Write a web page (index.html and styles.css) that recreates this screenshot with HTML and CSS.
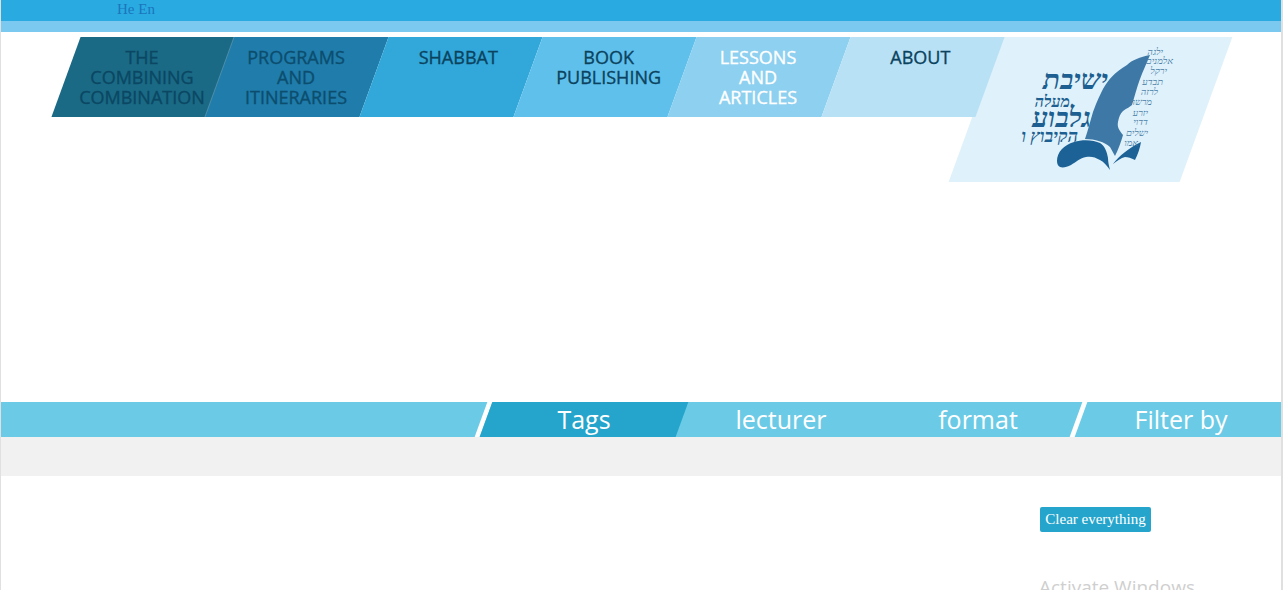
FILE: index.html
```html
<!DOCTYPE html>
<html lang="en">
  <head>
    <meta charset="UTF-8" />
    <meta name="viewport" content="width=device-width, initial-scale=1.0" />
    <title>Document</title>
    <link rel="stylesheet" href="styles.css">
  </head>
  <body>
    <div class="page">
      <div class="lang-bar">
        <a href="#">He</a>
        <a href="#">En</a>
      </div>
      <div class="sub-bar"></div>

      <header class="header">
        <nav class="main-nav">
          <a class="nav-item three-lines nav-1" href="#"><span>THE<br />COMBINING<br />COMBINATION</span></a>
          <a class="nav-item three-lines nav-2" href="#"><span>PROGRAMS<br />AND<br />ITINERARIES</span></a>
          <a class="nav-item nav-3" href="#"><span>SHABBAT</span></a>
          <a class="nav-item nav-4" href="#"><span>BOOK<br />PUBLISHING</span></a>
          <a class="nav-item three-lines nav-5" href="#"><span>LESSONS<br />AND<br />ARTICLES</span></a>
          <a class="nav-item nav-6" href="#"><span>ABOUT</span></a>
        </nav>
        <a class="logo" href="#">
          <svg class="logo-mark" viewBox="0 0 170 135" width="170" height="135">
            <path class="feather" d="M140 13 C130 15 122 18 117 23 C105 30 98 38 93 47 C88 57 86 62 83 70 C80 80 78 88 75 97 C85 97 95 100 100 105 L105 114 C108 108 111 100 113 93 C109 88 107 85 108 80 C109 75 110 72 113 69 C117 66 120 65 122 63 C125 53 127 45 130 37 C133 29 137 20 140 13 Z" />
            <path class="swoop" d="M47 119 C47 110 54 103 64 100 C73 97 84 98 90 101 C95 104 97 110 98 116 C98 120 99 124 100 128 C97 124 94 120 90 118 C85 115 81 114 76 115 C70 116 66 120 61 123 C57 125 53 126 50 125 C48 124 47 122 47 119 Z" />
            <path class="swoop" d="M103 122 C109 114 119 106 131 100 C130 106 128 112 125 118 C121 116 118 115 115 115 C111 116 107 119 103 122 Z" />
            <g class="logo-title">
              <text x="98" y="47">ישיבת</text>
              <text x="60" y="65" class="small-line">מעלה</text>
              <text x="81" y="85">גלבוע</text>
            </g>
            <text class="logo-kibbutz" x="68" y="100">הקיבוץ ו</text>
            <g class="logo-verse">
              <text x="153" y="13">ילגה</text>
              <text x="163" y="22">אלמנים</text>
              <text x="157" y="32">ירקל</text>
              <text x="153" y="43">תבדע</text>
              <text x="148" y="53">לרזה</text>
              <text x="142" y="63">מרשה</text>
              <text x="138" y="74">יזרע</text>
              <text x="138" y="83">דדוי</text>
              <text x="138" y="94">ישלים</text>
              <text x="128" y="104">אמו</text>
            </g>
          </svg>
        </a>
      </header>

      <div class="filter-bar">
        <div class="filter-tabs">
          <a class="filter-tab active" href="#"><span>Tags</span></a>
          <a class="filter-tab" href="#"><span>lecturer</span></a>
          <a class="filter-tab" href="#"><span>format</span></a>
        </div>
        <div class="filter-label">Filter by</div>
      </div>
      <div class="filter-panel"></div>

      <div class="actions">
        <button class="clear-btn" type="button">Clear everything</button>
      </div>

      <div class="watermark">Activate Windows</div>
    </div>
  </body>
</html>
```

FILE: styles.css
```css
html,
body {
  margin: 0;
  height: 100%;
  overflow: hidden;
}
body {
  font-family: "Liberation Serif", serif;
  background: #fff;
}
.page {
  position: relative;
  height: 100vh;
  overflow: hidden;
  border-left: 1px solid #e0e0e0;
  border-right: 2px solid #e0e0e0;
}
a {
  text-decoration: none;
}

/* top bars */
.lang-bar {
  height: 21px;
  padding-left: 116px;
  background: #29abe2;
  font-size: 15px;
  line-height: 19px;
}
.lang-bar a {
  color: #1b75bc;
}
.sub-bar {
  height: 11px;
  background: #7bc9f0;
}

/* main nav */
.header {
  display: flex;
  align-items: flex-start;
  height: 370px;
  padding: 5px 0 0 64.5px;
  box-sizing: border-box;
  font-family: "Open Sans", sans-serif;
}
.main-nav {
  display: flex;
  position: relative;
  z-index: 1;
}
.nav-item {
  width: 154px;
  height: 80px;
  box-sizing: border-box;
  padding-top: 10px;
  transform: skewX(-20deg);
  color: #0b435e;
  font-size: 18px;
  line-height: 20px;
  text-align: center;
  -webkit-text-stroke: 0.35px currentColor;
}
.nav-item span {
  display: block;
  transform: skewX(20deg);
}
.three-lines {
  padding-right: 2px;
}
.nav-1 {
  background: #1a6a85;
  color: #0b4763;
}
.nav-2 {
  background: #1f7cab;
  color: #0c4d6e;
  box-shadow: -1px 0 0 #4f8ea9;
}
.nav-3 {
  background: #31a7da;
}
.nav-4 {
  background: #60c0ec;
}
.nav-5 {
  background: #8dd0ef;
  color: #fff;
}
.nav-6 {
  background: #b8e1f5;
}
.logo {
  display: flex;
  justify-content: center;
  align-items: center;
  width: 231px;
  height: 145px;
  margin-left: -14.5px;
  padding-left: 9px;
  box-sizing: border-box;
  background: #dff1fa;
  transform: skewX(-20deg);
}
.logo-mark {
  flex: none;
  transform: skewX(20deg);
}
.feather {
  fill: #3d78a6;
}
.swoop {
  fill: #1c6296;
}
.logo-title text,
.logo-kibbutz,
.logo-verse text {
  direction: rtl;
  font-family: "Liberation Serif", serif;
  font-style: italic;
  fill: #1c5f90;
}
.logo-title text {
  font-size: 28px;
  font-weight: bold;
}
.logo-title .small-line {
  font-size: 16px;
}
.logo-kibbutz {
  font-size: 18px;
  font-weight: bold;
}
.logo-verse text {
  font-size: 9.5px;
  fill: #4a7fa8;
}

/* filter */
.filter-bar {
  display: flex;
  justify-content: flex-end;
  height: 35px;
  overflow: hidden;
  background: #6bcbe6;
  font-family: "Open Sans", sans-serif;
  font-size: 25px;
  line-height: 35px;
  color: #fff;
}
.filter-tabs {
  display: flex;
  gap: 1px;
  border-left: 5px solid #fff;
  border-right: 5px solid #fff;
  transform: skewX(-20deg);
}
.filter-tab {
  width: 196px;
  color: #fff;
  text-align: center;
}
.filter-tab span {
  display: block;
  transform: skewX(20deg);
}
.filter-tab.active {
  background: #25a5cc;
}
.filter-label {
  width: 200px;
  text-align: center;
}
.filter-panel {
  height: 39px;
  background: #f1f1f1;
}

.actions {
  display: flex;
  justify-content: flex-end;
  padding: 31px 130px 0 0;
}
.clear-btn {
  height: 25px;
  width: 111px;
  padding: 0;
  border: none;
  border-radius: 2px;
  background: #25a5cc;
  color: #fff;
  font-family: "Liberation Serif", serif;
  font-size: 15px;
}

/* os activation watermark lying over the page */
.watermark {
  position: absolute;
  left: 1038px;
  top: 574px;
  font-family: "Open Sans", sans-serif;
  font-size: 19px;
  line-height: 27px;
  color: #cfcfcf;
  white-space: nowrap;
}
```
